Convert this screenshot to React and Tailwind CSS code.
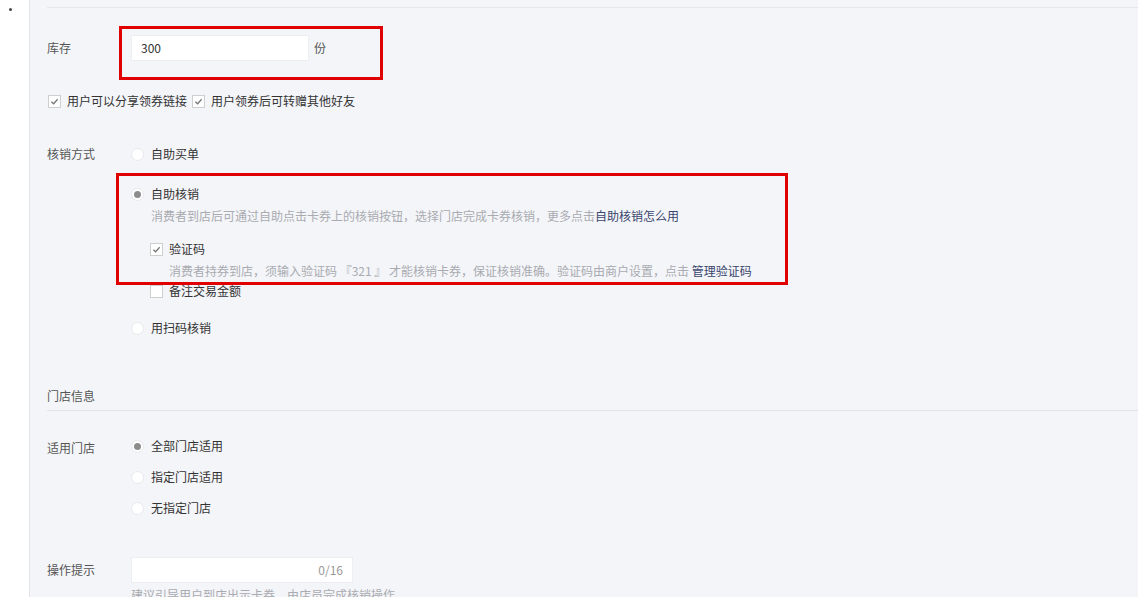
import { useState } from 'react';

const font = { fontFamily: '"Noto Sans CJK SC", "Noto Sans", sans-serif' };

function Radio({ checked, label }) {
  return (
    <label className="flex items-center h-4 text-[12px] text-[#333]">
      <span className="w-[13px] h-[13px] rounded-full bg-white border border-[#e8e9ed] flex items-center justify-center">
        {checked && <span className="w-[7px] h-[7px] rounded-full bg-[#8d8d8d]" />}
      </span>
      <span className="ml-[7px]">{label}</span>
    </label>
  );
}

function Check({ checked, label }) {
  return (
    <label className="flex items-center h-4 text-[12px] text-[#333]">
      <span className="w-[13px] h-[13px] bg-white border border-[#cfcfcf] flex items-center justify-center">
        {checked && (
          <svg width="9" height="9" viewBox="0 0 10 10">
            <path d="M1.5 5.2 L4 7.5 L8.5 2.5" fill="none" stroke="#777" strokeWidth="1.4" />
          </svg>
        )}
      </span>
      <span className="ml-[6px]">{label}</span>
    </label>
  );
}

export default function App() {
  const [stock] = useState('300');

  return (
    <div className="flex h-[597px] w-[1138px] overflow-hidden" style={font}>
      {/* left strip */}
      <div className="relative w-[30px] bg-white border-r border-[#e3e4e8] shrink-0">
        <span className="absolute left-[9px] top-[8px] w-[3px] h-[3px] rounded-full bg-[#444]" />
      </div>

      <main className="relative flex-1 bg-[#f4f5f9] pl-[17px] text-[12px] leading-4">
        <div className="h-[8px] border-b border-[#e6e7eb]" />

        {/* 库存 */}
        <div className="flex items-center mt-[27px]">
          <span className="w-[84px] text-[#555]">库存</span>
          <div className="w-[178px] h-[26px] bg-white border border-[#eceef2] flex items-center pl-[9px] text-[#333]">
            {stock}
          </div>
          <span className="ml-[5px] text-[#555]">份</span>
        </div>

        <div className="flex items-center mt-[32px] pl-[1px] gap-[5px]">
          <Check checked label="用户可以分享领券链接" />
          <Check checked label="用户领券后可转赠其他好友" />
        </div>

        {/* 核销方式 */}
        <div className="flex mt-[37px]">
          <span className="w-[84px] text-[#555]">核销方式</span>
          <div className="flex flex-col">
            <Radio label="自助买单" />
            <div className="mt-[24px]">
              <Radio checked label="自助核销" />
            </div>
            <p className="mt-[6px] ml-[20px] text-[#a9abb0]">
              消费者到店后可通过自助点击卡券上的核销按钮，选择门店完成卡券核销，更多点击
              <a className="text-[#38466d]">自助核销怎么用</a>
            </p>
            <div className="mt-[17px] ml-[19px]">
              <Check checked label="验证码" />
            </div>
            <p className="mt-[6px] ml-[38px] text-[#a9abb0]">
              消费者持券到店，须输入验证码 『321 』 才能核销卡券，保证核销准确。验证码由商户设置，点击{' '}
              <a className="text-[#38466d]">管理验证码</a>
            </p>
            <div className="mt-[4px] ml-[19px]">
              <Check label="备注交易金额" />
            </div>
            <div className="mt-[21px]">
              <Radio label="用扫码核销" />
            </div>
          </div>
        </div>

        {/* 门店信息 */}
        <div className="mt-[52px] text-[#555]">门店信息</div>
        <div className="mt-[6px] border-b border-[#e3e4e8]" />

        <div className="flex mt-[27px]">
          <span className="w-[84px] text-[#555] mt-[2px]">适用门店</span>
          <div className="flex flex-col gap-[15px]">
            <Radio checked label="全部门店适用" />
            <Radio label="指定门店适用" />
            <Radio label="无指定门店" />
          </div>
        </div>

        <div className="flex items-center mt-[41px]">
          <span className="w-[84px] text-[#555]">操作提示</span>
          <div className="w-[222px] h-[26px] bg-white border border-[#eceef2] flex items-center justify-end pr-[9px] text-[#999]">
            0/16
          </div>
        </div>
        <p className="mt-[4px] ml-[84px] text-[#a9abb0]">建议引导用户到店出示卡券，由店员完成核销操作</p>

        {/* annotation boxes */}
        <div className="absolute left-[89px] top-[26px] w-[264px] h-[54px] border-[3px] border-[#e10000]" />
        <div className="absolute left-[86px] top-[173px] w-[672px] h-[112px] border-[3px] border-[#e10000]" />
      </main>
    </div>
  );
}
